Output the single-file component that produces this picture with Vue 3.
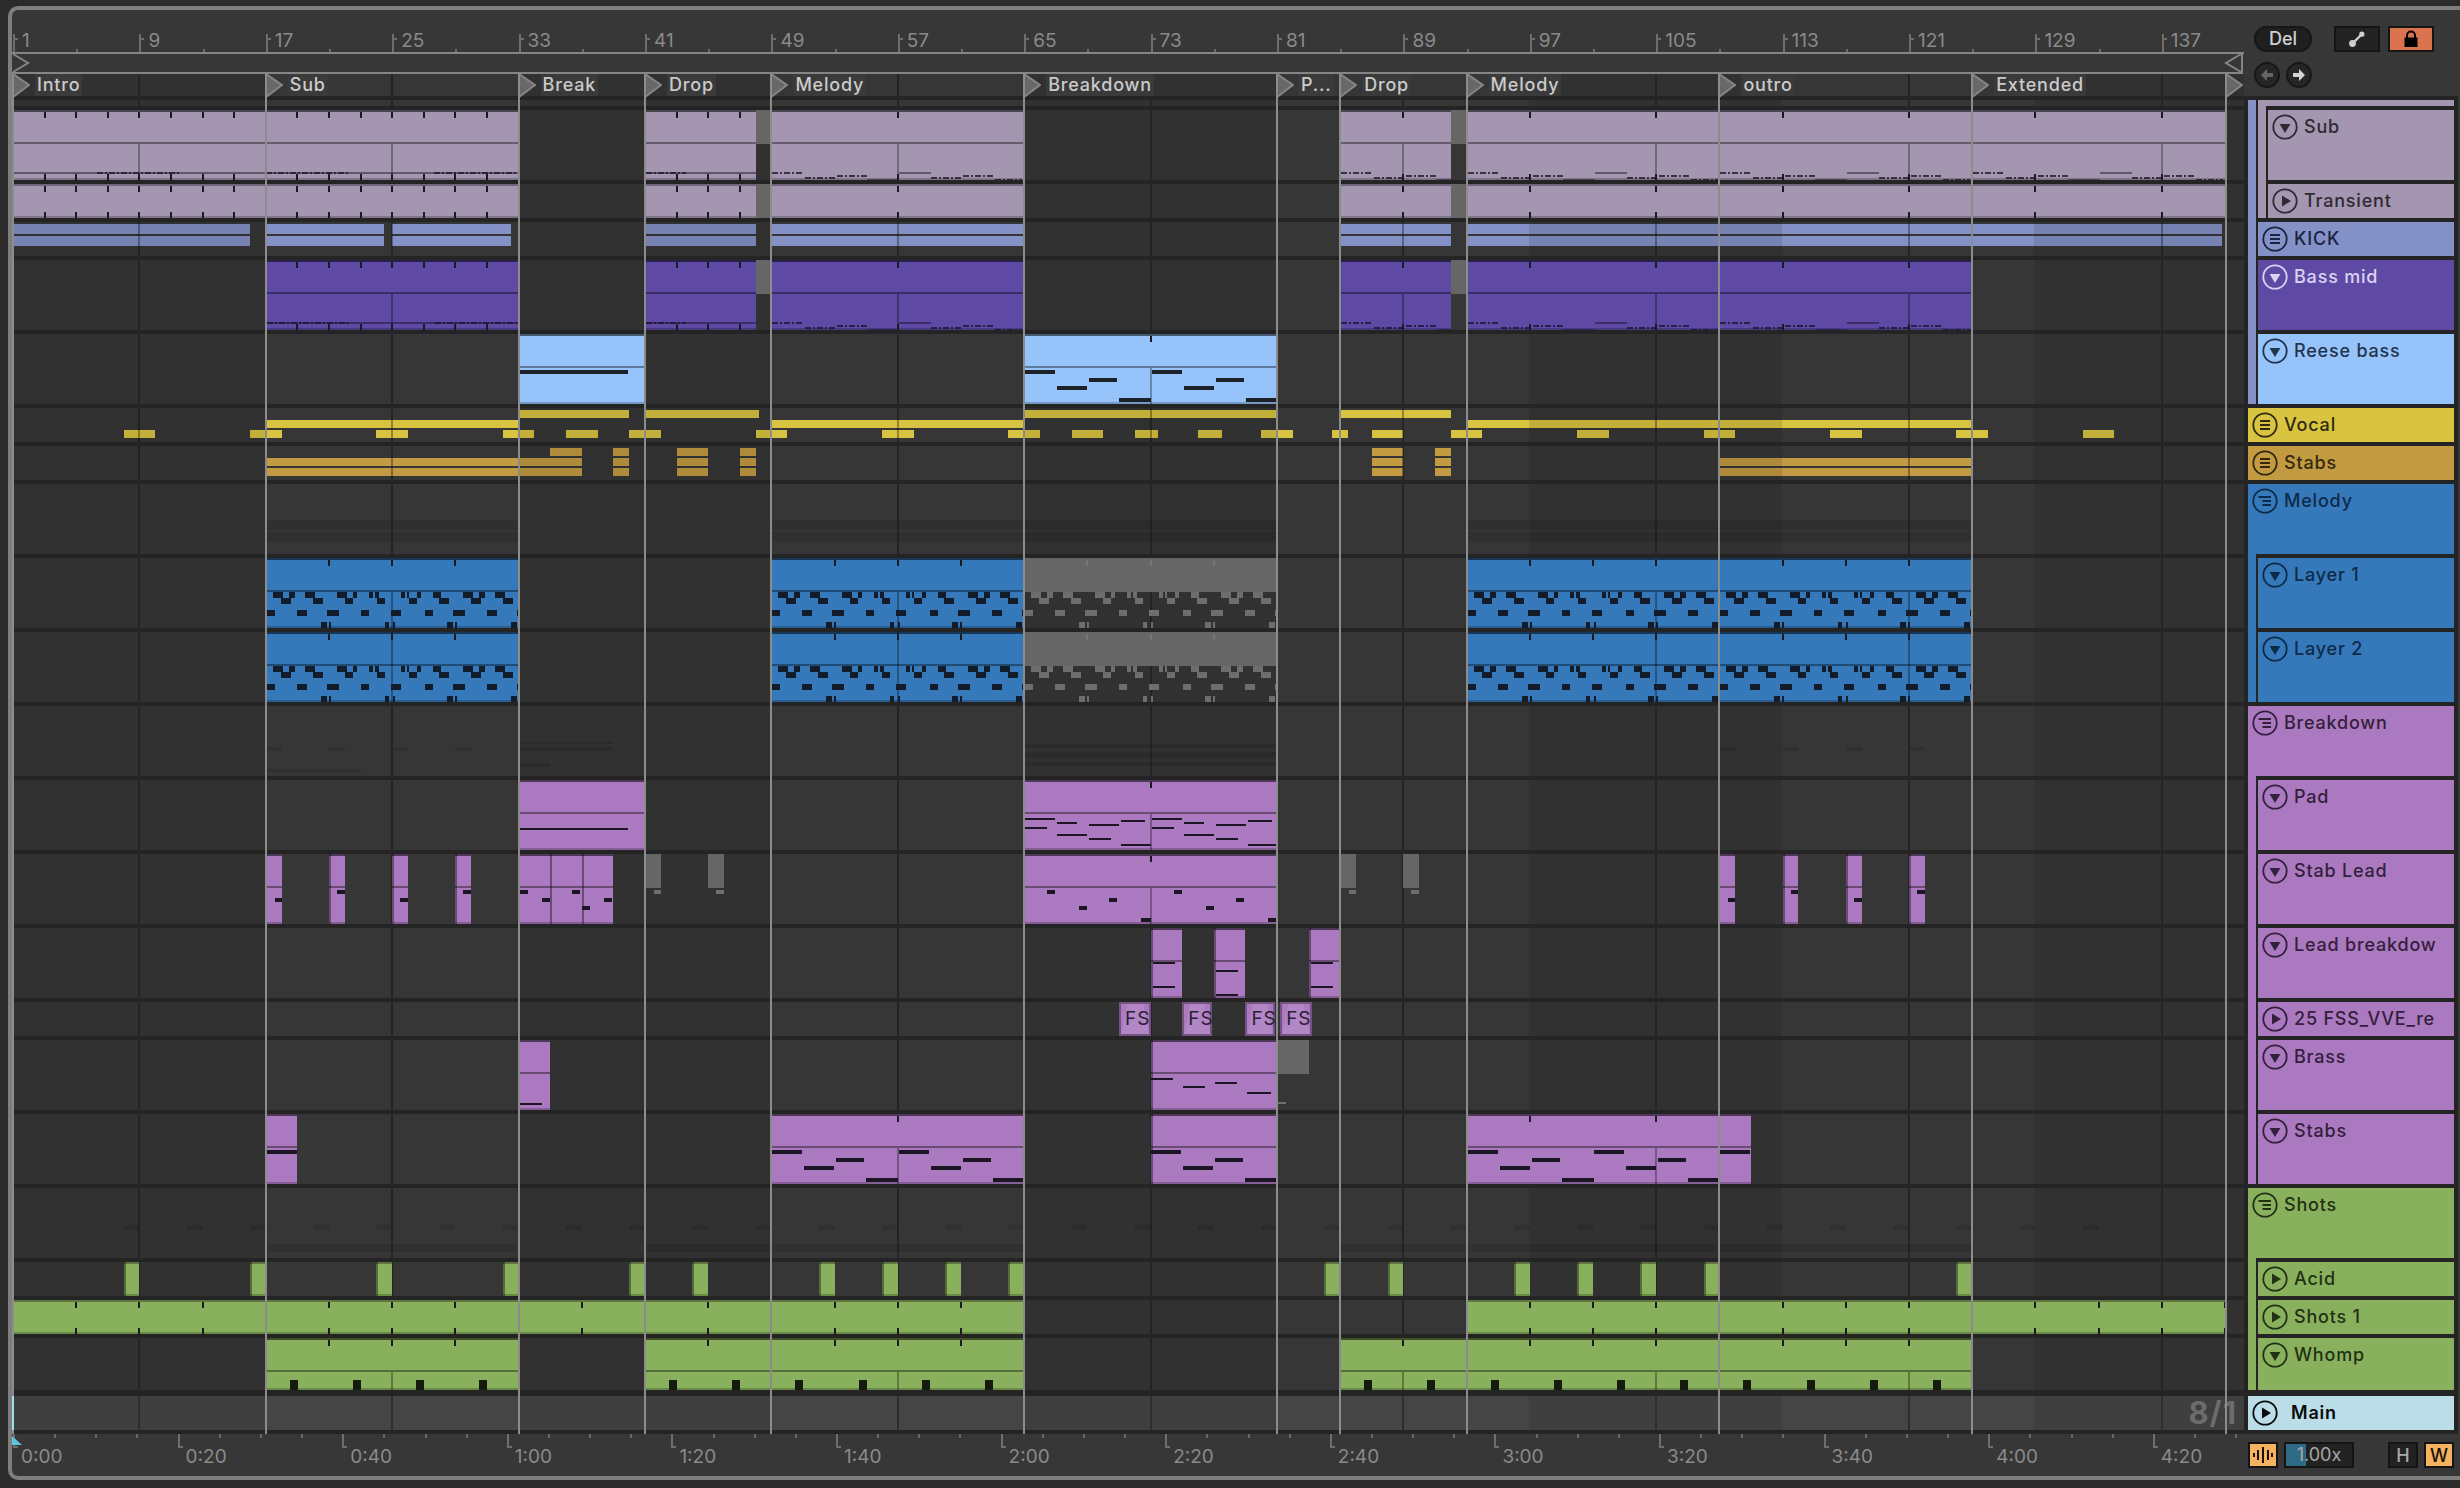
<template>
  <div class="frame">
    <!-- rulers and transport buttons -->
    <div class="top">
      <div class="rulers">
        <div class="beat-ruler">
          <i v-for="b in minorBars" :key="b" class="minor" :style="{ left: barX(b) + 'px' }"></i>
          <span v-for="b in majorBars" :key="b" class="bar-no" :style="{ left: barX(b) + 'px' }">{{ b }}</span>
        </div>
        <div class="scrub">
          <svg class="scrub-start" width="18" height="20" viewBox="0 0 18 20"><path d="M1 1 L16 10 L1 19" fill="none" stroke="#858585" stroke-width="2" /></svg>
          <svg class="scrub-end" width="18" height="20" viewBox="0 0 18 20"><path d="M17 1 L2 10 L17 19" fill="none" stroke="#858585" stroke-width="2" /></svg>
        </div>
        <div class="marks">
          <div v-for="l in locators" :key="l.bar" class="mark" :style="{ left: barX(l.bar) - 1 + 'px' }">
            <svg width="18" height="24" viewBox="0 0 18 24"><path d="M1 0 L17 11 L1 23 Z" fill="#686868" stroke="#868686" stroke-width="2" /></svg>
            <span v-if="l.name" class="mark-name">{{ l.name }}</span>
          </div>
        </div>
      </div>
      <div class="tools">
        <div class="tool-row">
          <span class="del">Del</span>
          <span class="square">
            <svg width="18" height="18" viewBox="0 0 18 18"><path d="M4 14 L14 4" stroke="#cfcfcf" stroke-width="2.4" /><circle cx="4.5" cy="13.5" r="3.4" fill="#cfcfcf" /><circle cx="13.8" cy="4.2" r="2.6" fill="#cfcfcf" /></svg>
          </span>
          <span class="square orange">
            <svg width="18" height="18" viewBox="0 0 18 18"><path d="M5 8 V5.5 a4 4 0 0 1 8 0 V8" fill="none" stroke="#000" stroke-width="2" /><rect x="2.5" y="7.5" width="13" height="9.5" fill="#000" /></svg>
          </span>
        </div>
        <div class="tool-row nav">
          <span class="round">
            <svg width="18" height="18" viewBox="0 0 18 18"><path d="M9 3 L3 9 L9 15 V11 H15 V7 H9 Z" fill="#666" /></svg>
          </span>
          <span class="round">
            <svg width="18" height="18" viewBox="0 0 18 18"><path d="M9 3 L15 9 L9 15 V11 H3 V7 H9 Z" fill="#d4d4d4" /></svg>
          </span>
        </div>
      </div>
    </div>

    <!-- tracks: lane on the left, header on the right -->
    <div class="tracks">
      <div v-for="(row, i) in rows" :key="i" class="row" :style="{ height: row.h + row.gap + 'px' }">
        <div class="lane" :class="{ overview: row.overview, master: row.master }" :style="{ height: row.h + 'px' }">
          <i v-for="(g, j) in row.ghosts" :key="j" class="ghost" :style="g"></i>
          <div
            v-for="(c, j) in row.clips"
            :key="j"
            class="clip"
            :class="[c.gray ? 'gray' : row.tone, { solid: c.gray && !c.head, edged: c.edged, strip: c.strip, boxed: c.label }]"
            :style="c.style"
          >
            <div v-if="c.head" class="clip-head"></div>
            <i v-for="(l, k) in c.lines" :key="k" class="gridline" :style="l"></i>
            <i v-for="(t, k) in c.ticks" :key="k" class="tick" :style="t"></i>
            <i v-for="(n, k) in c.notes" :key="k" class="note" :class="n.kind" :style="n.style"></i>
            <template v-if="c.label">
              <i class="wedge"></i>
              <span class="clip-label">{{ c.label }}</span>
            </template>
          </div>
          <span v-if="row.master" class="signature">8/1</span>
        </div>
        <div class="side">
          <i
            v-for="(s, j) in row.stripes"
            :key="j"
            class="stripe"
            :class="[s.tone, { end: s.end, flush: s.flush }]"
            :style="s.end ? { marginBottom: row.gap + 'px' } : null"
          ></i>
          <div class="head" :class="row.tone" :style="{ height: row.h + 'px' }">
            <svg v-if="row.icon" class="head-icon" width="26" height="26" viewBox="0 0 26 26">
              <circle cx="13" cy="13" r="11.7" fill="none" stroke="currentColor" stroke-width="1.8" />
              <path v-if="row.icon === 'down'" d="M7.6 10 H18.4 L13 19 Z" fill="currentColor" />
              <path v-if="row.icon === 'right'" d="M10 7.6 V18.4 L19 13 Z" fill="currentColor" />
              <path v-if="row.icon === 'list'" d="M8 9 H18 M8 13 H18 M8 17 H18" stroke="currentColor" stroke-width="2" />
              <path v-if="row.icon === 'group'" d="M6.5 9 H19 M10.5 13 H19 M10.5 17 H19" stroke="currentColor" stroke-width="2" />
            </svg>
            <span v-if="row.name" class="head-name">{{ row.name }}</span>
          </div>
          <i v-if="row.tail" class="tail" :class="row.tone" :style="{ height: row.gap + 'px' }"></i>
        </div>
      </div>
    </div>

    <!-- time ruler and bottom controls -->
    <div class="bottom">
      <div class="time-ruler">
        <i v-for="t in timeTicks" :key="t" class="time-tick" :style="{ left: t + 'px' }"></i>
        <span v-for="(t, i) in timeLabels" :key="t" class="time-no" :style="{ left: 1 + i * 164.6 + 'px' }">{{ t }}</span>
        <svg class="play-mark" width="10" height="9" viewBox="0 0 10 9"><path d="M0 0 L10 9 H0 Z" fill="#5bc6dd" /></svg>
      </div>
      <div class="controls">
        <span class="key on wave">
          <svg width="22" height="18" viewBox="0 0 22 18"><path d="M2 7 V11 M6 4 V14 M11 1 V17 M16 4 V14 M20 7 V11" stroke="#1a1208" stroke-width="2" /></svg>
        </span>
        <span class="speed"><i class="speed-fill"></i><span class="speed-text">1.00x</span></span>
        <span class="spacer"></span>
        <span class="key">H</span>
        <span class="key on">W</span>
      </div>
    </div>

    <!-- locator lines run over every track -->
    <i v-for="l in locators" :key="l.bar" class="loc-line" :style="{ left: barX(l.bar) - 1 + 'px' }"></i>
    <i class="playhead"></i>
  </div>
</template>

<script setup>
const U = 15.8
const WIDE = 252.8 // 16 bars
const EIGHT = 126.4
const END = 141.05

// position of a bar inside the lane (lane starts 1px before bar 1)
const barX = (b) => 1 + (b - 1) * U

const locators = [
  [1, 'Intro'], [17, 'Sub'], [33, 'Break'], [41, 'Drop'], [49, 'Melody'], [65, 'Breakdown'],
  [81, 'P...'], [85, 'Drop'], [93, 'Melody'], [109, 'outro'], [125, 'Extended'], [END, '']
].map(([bar, name]) => ({ bar, name }))
const locatorBars = locators.map((l) => l.bar)

const majorBars = []
for (let b = 1; b < 140; b += 8) majorBars.push(b)
const minorBars = majorBars.map((b) => b + 4).filter((b) => b < 141)

const timeLabels = ['0:00', '0:20', '0:40', '1:00', '1:20', '1:40', '2:00', '2:20', '2:40', '3:00', '3:20', '3:40', '4:00', '4:20']
const timeTicks = []
for (let i = 1; i < 55; i++) if (i % 4) timeTicks.push(Math.round(1 + i * 41.15))

// note patterns: [x, y, w, h, kind]
const wavePattern = [
  [0, 62, 30, 2, 'dash'], [33, 67, 30, 2, 'dash'], [65, 65, 30, 2, 'dash'], [95, 69, 32, 2, 'soft'],
  [127, 62, 32, 2, 'soft'], [159, 67, 30, 2, 'dash'], [191, 65, 30, 2, 'dash'], [223, 69, 27, 2, 'dash']
]
const reesePattern = [[0, 36, 30, 4], [32, 52, 30, 4], [64, 44, 28, 4], [94, 64, 32, 4]]
const stabPattern = [[22, 36, 8, 4], [54, 52, 8, 4], [84, 44, 8, 4], [116, 64, 10, 4]]
const padPattern = [[0, 38, 30, 2], [0, 47, 22, 2], [32, 54, 30, 2], [32, 42, 20, 2], [64, 44, 30, 2], [64, 58, 22, 2], [96, 64, 30, 2], [96, 40, 24, 2]]
const brassPattern = [[0, 38, 22, 2], [32, 46, 22, 2], [64, 42, 22, 2], [96, 52, 24, 2]]

const layerRows = [
  [34, [[6, 10], [22, 6], [38, 10], [70, 10], [86, 4], [102, 4], [108, 4], [134, 4], [140, 2], [150, 4], [166, 8], [196, 10], [212, 6], [228, 10]]],
  [40, [[14, 10], [46, 10], [78, 8], [110, 8], [142, 8], [172, 10], [204, 10], [236, 10]]],
  [52, [[0, 8], [30, 10], [60, 12], [94, 8], [124, 10], [158, 8], [186, 12], [220, 10], [250, 2]]],
  [64, [[54, 6], [62, 2], [118, 4], [126, 2], [180, 6], [188, 2], [244, 6]]]
]
const layerPattern = layerRows.flatMap(([y, list]) => list.map(([x, w]) => [x, y, w, 6]))

const flat = (dashes) => [[0, 62, 520, 2, 'soft'], ...dashes.map(([x, w]) => [x, 62, w, 2, 'dash'])]

// a clip is [from bar, to bar, options]
function makeClip(row, [a, b, o = {}]) {
  const onLoc = locatorBars.includes(a)
  const left = barX(a) + (onLoc ? 1 : 0)
  const right = barX(b) - (locatorBars.includes(b) ? 1 : 0)
  const width = right - left
  const y = o.y ?? 0
  const h = o.h ?? row.h
  const head = !o.strip && h >= 52
  const notes = []
  if (o.notes) {
    const period = o.period ?? 0
    for (let k = 0; k === 0 || (period && k * period < width); k++) {
      for (const [nx, ny, nw, nh, kind] of o.notes) {
        notes.push({
          kind,
          style: { left: nx + k * period + 'px', top: ny + 'px', width: nw + 'px', height: nh + 'px' }
        })
      }
    }
  }
  const ticks = []
  const lines = []
  if (!o.strip && !o.label && !o.noTicks) {
    const step = o.tick ?? 8
    for (let bar = 1; bar < END; bar += step) {
      if (bar <= a || bar >= b) continue
      const x = barX(bar) - left - 1
      ticks.push({ left: x + 'px', top: '2px' })
      if (row.bottomTicks) ticks.push({ left: x + 'px', top: h - 6 + 'px' })
    }
    for (let bar = 9; bar < END; bar += 16) {
      if (bar <= a || bar >= b) continue
      const x = barX(bar) - left - 1
      if (row.fullLine) lines.push({ left: x + 'px', top: 0, height: h + 'px' })
      else if (head) lines.push({ left: x + 'px', top: '34px', height: h - 34 + 'px' })
    }
  }
  return {
    gray: o.gray,
    head,
    strip: o.strip,
    label: o.label,
    edged: onLoc === false || o.edged,
    notes,
    ticks,
    lines,
    style: { left: left + 'px', width: width + 'px', top: y + 'px', height: h + 'px' }
  }
}

const bandList = (list, opt) => list.map(([a, b]) => [a, b, { strip: true, ...opt }])

const kickBars = [[1, 16], [17, 24.5], [25, 32.5], [41, 48], [49, 64.9], [85, 92], [93, 108.9], [109, 124.9], [125, 140.8]]
const vocalTop = [[33, 40], [41, 48.2], [65, 81], [85, 92]]
const vocalMid = [[17, 33], [49, 65], [93, 125]]
const vocalLow = [[8, 10], [16, 18], [24, 26], [32, 34], [36, 38], [40, 42], [48, 50], [56, 58], [64, 66], [68, 70], [72, 73.5], [76, 77.5], [80, 82], [84.5, 85.5], [87, 89], [92, 94], [100, 102], [108, 110], [116, 118], [124, 126], [132, 134]]
const stabsTop = [[35, 37], [39, 40], [43, 45], [47, 48], [87, 89], [91, 92]]
const stabsLow = [[17, 37], [39, 40], [43, 45], [47, 48], [87, 89], [91, 92], [109, 125]]

const stripeKick = { tone: 'kick' }
const stripeLilac = { tone: 'lilac' }
const stripeBlue = { tone: 'blue' }
const stripePink = { tone: 'pink' }
const stripeGreen = { tone: 'green' }

const ghost = (a, b, y, h) => ({ left: barX(a) + 'px', width: (b - a) * U + 'px', top: y + 'px', height: h + 'px' })
const everyFour = (from, count, y, h) => Array.from({ length: count }, (_, i) => ghost(from + i * 4, from + i * 4 + 1, y, h))

const subClips = (tall) => {
  const n = (list) => (tall ? { notes: list } : {})
  return [
    [1, 33, { tick: 2, ...n(flat([[83, 84], [252, 84], [420, 85]])) }],
    [41, 48, { tick: 2, ...n(flat([[0, 40]])) }],
    [48, 49, { gray: true, noTicks: true }],
    [49, 65, { ...(tall ? { notes: wavePattern, period: WIDE } : {}) }],
    [85, 92, { tick: 8, ...(tall ? { notes: wavePattern } : {}) }],
    [92, 93, { gray: true, noTicks: true }],
    [93, END, { ...(tall ? { notes: wavePattern, period: WIDE } : {}) }]
  ]
}

const rawRows = [
  { h: 6, tone: 'lilac', stripes: [stripeKick, { tone: 'lilac', flush: true }] },
  { name: 'Sub', h: 70, tone: 'lilac', icon: 'down', stripes: [stripeKick, stripeLilac], bottomTicks: true, clips: subClips(true) },
  { name: 'Transient', h: 34, tone: 'lilac', icon: 'right', stripes: [stripeKick, { tone: 'lilac', end: true }], bottomTicks: true, clips: subClips(false) },
  { name: 'KICK', h: 34, tone: 'kick', icon: 'list', stripes: [stripeKick], overview: true,
    clips: [...bandList(kickBars, { y: 2, h: 10 }), ...bandList(kickBars, { y: 14, h: 10 })] },
  { name: 'Bass mid', h: 70, tone: 'purple', icon: 'down', stripes: [stripeKick], bottomTicks: true,
    clips: [
      [17, 33, { tick: 2, notes: flat([[0, 84], [168, 85]]) }],
      [41, 48, { tick: 2, notes: flat([[0, 40]]) }],
      [48, 49, { gray: true, noTicks: true }],
      [49, 65, { notes: wavePattern, period: WIDE }],
      [85, 92, { notes: wavePattern }],
      [92, 93, { gray: true, noTicks: true }],
      [93, 109, { notes: wavePattern, period: WIDE }],
      [109, 125, { notes: wavePattern, period: WIDE }]
    ] },
  { name: 'Reese bass', h: 70, tone: 'reese', icon: 'down', stripes: [{ tone: 'kick', end: true }],
    clips: [[33, 41, { notes: [[0, 36, 108, 4]] }], [65, 81, { notes: reesePattern, period: EIGHT }]] },
  { name: 'Vocal', h: 34, tone: 'vocal', icon: 'list', stripes: [], overview: true,
    clips: [...bandList(vocalTop, { y: 2, h: 8 }), ...bandList(vocalMid, { y: 12, h: 8 }), ...bandList(vocalLow, { y: 22, h: 8 })] },
  { name: 'Stabs', h: 34, tone: 'stabs', icon: 'list', stripes: [], overview: true,
    clips: [...bandList(stabsTop, { y: 2, h: 8 }), ...bandList(stabsLow, { y: 12, h: 8 }), ...bandList(stabsLow, { y: 22, h: 8 })] },
  { name: 'Melody', h: 70, tone: 'blue', icon: 'group', stripes: [], tail: true,
    ghosts: [[17, 33], [49, 65], [65, 81], [93, 125]].flatMap(([a, b]) => [ghost(a, b, 36, 10), ghost(a, b, 48, 10)]) },
  { name: 'Layer 1', h: 70, tone: 'blue', icon: 'down', stripes: [stripeBlue],
    clips: layerClips() },
  { name: 'Layer 2', h: 70, tone: 'blue', icon: 'down', stripes: [{ tone: 'blue', end: true }], fullLine: true,
    clips: layerClips() },
  { name: 'Breakdown', h: 70, tone: 'pink', icon: 'group', stripes: [], tail: true,
    ghosts: [...everyFour(17, 4, 41, 4), ghost(17, 23, 63, 3), ghost(33, 39, 36, 2), ghost(33, 39, 41, 4), ghost(33, 35, 57, 4), ghost(65, 81, 38, 4), ghost(65, 81, 46, 6), ghost(65, 81, 56, 4), ...everyFour(109, 4, 41, 4)] },
  { name: 'Pad', h: 70, tone: 'pink', icon: 'down', stripes: [stripePink],
    clips: [[33, 41, { notes: [[0, 48, 108, 2]] }], [65, 81, { notes: padPattern, period: EIGHT }]] },
  { name: 'Stab Lead', h: 70, tone: 'pink', icon: 'down', stripes: [stripePink],
    clips: [
      [17, 18, { notes: [[8, 44, 8, 4]] }], [21, 22, { notes: [[8, 36, 8, 4]] }], [25, 26, { notes: [[8, 44, 8, 4]] }], [29, 30, { notes: [[8, 36, 8, 4]] }],
      [33, 35, { notes: [[0, 36, 8, 4], [22, 44, 8, 4]] }], [35, 37, { notes: [[22, 36, 8, 4]] }], [37, 39, { notes: [[0, 52, 8, 4], [22, 44, 8, 4]] }],
      [41, 42, { gray: true, notes: [[8, 36, 8, 4]] }], [45, 46, { gray: true, notes: [[8, 36, 8, 4]] }],
      [65, 81, { notes: stabPattern, period: EIGHT }],
      [85, 86, { gray: true, notes: [[8, 36, 8, 4]] }], [89, 90, { gray: true, notes: [[8, 36, 8, 4]] }],
      [109, 110, { notes: [[8, 44, 8, 4]] }], [113, 114, { notes: [[8, 36, 8, 4]] }], [117, 118, { notes: [[8, 44, 8, 4]] }], [121, 122, { notes: [[8, 36, 8, 4]] }]
    ] },
  { name: 'Lead breakdown'.slice(0, 13), h: 70, tone: 'pink', icon: 'down', stripes: [stripePink],
    clips: [
      [73, 75, { edged: true, notes: [[2, 34, 22, 2], [2, 58, 22, 2]] }],
      [77, 79, { notes: [[2, 42, 22, 2], [2, 66, 22, 2]] }],
      [83, 85, { notes: [[2, 34, 22, 2], [2, 58, 22, 2]] }]
    ] },
  { name: '25 FSS_VVE_re', h: 34, tone: 'pink', icon: 'right', stripes: [stripePink],
    clips: [[71, 73.05], [75, 76.9], [79, 80.85], [81.2, 83.2]].map(([a, b]) => [a, b, { label: 'FSS', edged: true }]) },
  { name: 'Brass', h: 70, tone: 'pink', icon: 'down', stripes: [stripePink],
    clips: [
      [33, 35, { notes: [[0, 63, 22, 2]] }],
      [73, 81, { notes: brassPattern, period: EIGHT }],
      [81, 83, { gray: true, notes: [[0, 62, 8, 2]] }]
    ] },
  { name: 'Stabs', h: 70, tone: 'pink', icon: 'down', stripes: [{ tone: 'pink', end: true }],
    clips: [
      [17, 19, { notes: reesePattern }],
      [49, 65, { notes: reesePattern, period: EIGHT }],
      [73, 81, { notes: reesePattern, period: EIGHT }],
      [93, 109, { notes: reesePattern, period: EIGHT }],
      [109, 111, { notes: reesePattern }]
    ] },
  { name: 'Shots', h: 70, tone: 'green', icon: 'group', stripes: [], tail: true,
    ghosts: [[17, 33], [41, 65], [85, 125]].flatMap(([a, b]) => [ghost(a, b, 56, 8)]).concat(everyFour(8, 32, 37, 5)) },
  { name: 'Acid', h: 34, tone: 'green', icon: 'right', stripes: [stripeGreen],
    clips: [8, 16, 24, 32, 40, 44, 52, 56, 60, 64, 84, 88, 96, 100, 104, 108, 124].map((b) => [b, b + 1, { noTicks: true, edged: true }]) },
  { name: 'Shots 1', h: 34, tone: 'green', icon: 'right', stripes: [stripeGreen], bottomTicks: true,
    clips: [[1, 65, { tick: 4 }], [93, END, { tick: 4 }]] },
  { name: 'Whomp', h: 52, gap: 6, tone: 'green', icon: 'down', stripes: [{ tone: 'green', end: true }],
    clips: [[17, 33], [41, 65], [85, 125]].map(([a, b]) => [a, b, { tick: 4, notes: [[23, 42, 8, 10]], period: 63.2 }]) },
  { name: 'Main', h: 34, tone: 'main', icon: 'right', stripes: [], master: true }
]

function layerClips() {
  const opt = { tick: 4, notes: layerPattern, period: WIDE }
  return [[17, 33, opt], [49, 65, opt], [65, 81, { ...opt, gray: true }], [93, 109, opt], [109, 125, opt]]
}

const rows = rawRows.map((row) => ({
  gap: 4,
  ...row,
  clips: (row.clips ?? []).map((c) => makeClip(row, c))
}))
</script>

<style scoped>
.frame {
  position: relative;
  box-sizing: border-box;
  width: 2452px;
  height: 1474px;
  margin: 6px 0 0 8px;
  border: 4px solid #7e7e7e;
  border-right: 0;
  border-radius: 10px 0 0 10px;
  background: #373737;
  font-family: Inter, "Liberation Sans", sans-serif;
  overflow: hidden;
}

.top {
  display: flex;
  height: 86px;
}

.rulers {
  position: relative;
  flex: none;
  width: 2232px;
}

.beat-ruler {
  position: relative;
  height: 42px;
  border-bottom: 2px solid #858585;
}

.minor {
  position: absolute;
  bottom: 0;
  width: 2px;
  height: 3px;
  background: #6c6c6c;
}

.bar-no {
  position: absolute;
  top: 24px;
  height: 18px;
  padding-left: 7px;
  border-left: 2px solid #6e6e6e;
  color: #8a8a8a;
  font-size: 19px;
  line-height: 14px;
}

.bar-no::before {
  content: "";
  position: absolute;
  top: 4px;
  left: 0;
  width: 3px;
  height: 2px;
  background: #6e6e6e;
}

.scrub {
  position: relative;
  height: 18px;
  border-bottom: 2px solid #858585;
  border-right: 2px solid #858585;
  margin-right: 1px;
}

.scrub-start {
  position: absolute;
  top: -1px;
  left: 0;
}

.scrub-end {
  position: absolute;
  top: -1px;
  right: -1px;
}

.marks {
  position: relative;
  height: 22px;
  background:
    repeating-linear-gradient(90deg, transparent 0 126.4px, #242424 126.4px 128.4px, transparent 128.4px 252.8px),
    repeating-linear-gradient(90deg, #313131 0 252.8px, #363636 252.8px 505.6px);
}

.mark {
  position: absolute;
  top: 0;
  display: flex;
  height: 22px;
}

.mark-name {
  height: 22px;
  margin-left: 5px;
  padding: 0 2px;
  background: #3a3a3a;
  color: #cbcbcb;
  font-size: 18px;
  font-weight: 500;
  letter-spacing: 0.8px;
  line-height: 22px;
  white-space: nowrap;
}

.tools {
  display: flex;
  flex-direction: column;
  gap: 10px;
  padding: 16px 0 0 10px;
}

.tool-row {
  display: flex;
  align-items: center;
  gap: 8px;
}

.del {
  width: 58px;
  height: 26px;
  margin-right: 14px;
  border-radius: 13px;
  background: #1f1f1f;
  box-shadow: inset 0 0 0 2px #171717;
  color: #d0d0d0;
  font-size: 18px;
  font-weight: 500;
  line-height: 26px;
  text-align: center;
}

.square {
  display: flex;
  align-items: center;
  justify-content: center;
  box-sizing: border-box;
  width: 46px;
  height: 26px;
  border: 2px solid #151515;
  background: #232323;
}

.orange {
  background: #d9744f;
}

.nav {
  gap: 6px;
}

.round {
  display: flex;
  align-items: center;
  justify-content: center;
  box-sizing: border-box;
  width: 26px;
  height: 26px;
  border: 2px solid #171717;
  border-radius: 50%;
  background: #262626;
}

.tracks {
  width: 2446px;
  padding-top: 4px;
  background: #242424;
}

.row {
  display: flex;
}

.lane {
  position: relative;
  flex: none;
  width: 2232px;
  background:
    repeating-linear-gradient(90deg, transparent 0 126.4px, #242424 126.4px 128.4px, transparent 128.4px 252.8px),
    repeating-linear-gradient(90deg, #313131 0 252.8px, #363636 252.8px 505.6px);
}

.lane.overview {
  background: #363636;
}

.lane.overview::after {
  content: "";
  position: absolute;
  inset: 0;
  background:
    repeating-linear-gradient(90deg, transparent 0 126.4px, rgba(0, 0, 0, 0.32) 126.4px 128.4px, transparent 128.4px 252.8px),
    repeating-linear-gradient(90deg, rgba(0, 0, 0, 0.1) 0 252.8px, transparent 252.8px 505.6px);
  pointer-events: none;
}

.lane.master {
  background:
    repeating-linear-gradient(90deg, transparent 0 126.4px, #2e2e2e 126.4px 128.4px, transparent 128.4px 252.8px),
    repeating-linear-gradient(90deg, #3f3f3f 0 252.8px, #454545 252.8px 505.6px);
}

.ghost {
  position: absolute;
  background: rgba(0, 0, 0, 0.11);
}

.signature {
  position: absolute;
  top: 0;
  right: 7px;
  color: #6c6c6c;
  font-size: 31px;
  font-weight: 700;
  line-height: 34px;
  letter-spacing: 1px;
}

.clip {
  position: absolute;
  overflow: hidden;
  --ink: #1b1b1f;
  box-shadow: inset 0 2px 0 rgba(0, 0, 0, 0.32), inset 0 -2px 0 rgba(0, 0, 0, 0.22);
}

.clip.edged {
  box-shadow: inset 2px 0 0 rgba(0, 0, 0, 0.38), inset 0 2px 0 rgba(0, 0, 0, 0.32), inset 0 -2px 0 rgba(0, 0, 0, 0.22);
}

.clip.strip {
  box-shadow: none;
}

.clip.boxed {
  box-shadow: inset 0 0 0 2px rgba(0, 0, 0, 0.32);
}

.clip-head {
  position: absolute;
  top: 0;
  left: 0;
  width: 100%;
  height: 34px;
  box-shadow: inset 0 2px 0 rgba(0, 0, 0, 0.32), inset 0 -2px 0 rgba(0, 0, 0, 0.38);
}

.gridline {
  position: absolute;
  width: 2px;
  background: rgba(0, 0, 0, 0.3);
}

.tick {
  position: absolute;
  width: 2px;
  height: 6px;
  background: #1a1a20;
}

.note {
  position: absolute;
  background: var(--ink);
}

.note.soft {
  opacity: 0.5;
}

.note.dash {
  background: repeating-linear-gradient(90deg, var(--ink) 0 6px, transparent 6px 8px, var(--ink) 8px 10px, transparent 10px 12px);
  opacity: 0.8;
}

.clip-label {
  position: relative;
  display: block;
  padding-left: 6px;
  color: #2a1f33;
  font-size: 19px;
  line-height: 34px;
  letter-spacing: 1px;
}

.wedge {
  position: absolute;
  inset: 2px 2px 2px 2px;
  background: rgba(255, 255, 255, 0.1);
  clip-path: polygon(22% 0, 78% 0, 100% 100%, 0 100%);
}

.clip.gray {
  --ink: #6e6e6e;
  background: transparent;
  box-shadow: none;
}

.clip.gray .clip-head {
  background: #666;
  box-shadow: none;
}

.clip.gray .tick {
  background: #757575;
}

.clip.gray .gridline {
  background: transparent;
}

.clip.gray.solid {
  background: #666;
}

.side {
  position: relative;
  display: flex;
  flex: none;
  width: 206px;
  margin-left: 4px;
}

.stripe {
  flex: none;
  width: 8px;
  margin-right: 2px;
}

.stripe.flush {
  margin-right: 0;
}

.head {
  position: relative;
  display: flex;
  flex: 1;
  min-width: 0;
  overflow: hidden;
  padding: 4px 0 0 4px;
  box-sizing: border-box;
  color: #2d2933;
}

.head-icon {
  flex: none;
}

.head-name {
  margin-left: 6px;
  font-size: 18px;
  font-weight: 500;
  letter-spacing: 0.8px;
  line-height: 26px;
  white-space: nowrap;
}

.tail {
  position: absolute;
  bottom: 0;
  left: 0;
  width: 8px;
}

.lilac { background: #a495b1; --ink: #1e1a24; color: #2e2a33; }
.kick { background: #8391c6; color: #1c2340; }
.purple { background: #5e49a4; --ink: #1b1430; color: #dcd3f2; }
.reese { background: #97c3fb; --ink: #1d2228; color: #22344c; }
.vocal { background: #d8c440; color: #2f2a0d; }
.stabs { background: #c29a41; color: #33280f; }
.blue { background: #3579bb; --ink: #131c2a; color: #0d2a48; }
.pink { background: #ab79bf; --ink: #1c1524; color: #33203c; }
.green { background: #89b05c; --ink: #151b0f; color: #223015; }
.main { background: #badde8; color: #0a0a0a; }

.main .head-name {
  margin-left: 13px;
  font-weight: 600;
}

.bottom {
  display: flex;
  height: 42px;
}

.time-ruler {
  position: relative;
  flex: none;
  width: 2236px;
}

.time-tick {
  position: absolute;
  top: 0;
  width: 2px;
  height: 4px;
  background: #666;
}

.time-no {
  position: absolute;
  top: 0;
  height: 14px;
  padding-left: 6px;
  border-left: 2px solid #6e6e6e;
  color: #8a8a8a;
  font-size: 19px;
  line-height: 46px;
}

.time-no::before {
  content: "";
  position: absolute;
  bottom: 0;
  left: 0;
  width: 3px;
  height: 2px;
  background: #6e6e6e;
}

.play-mark {
  position: absolute;
  top: 2px;
  left: 0;
}

.controls {
  display: flex;
  flex: 1;
  gap: 6px;
  height: 26px;
  padding-top: 8px;
  padding-right: 6px;
}

.key {
  display: flex;
  align-items: center;
  justify-content: center;
  box-sizing: border-box;
  width: 30px;
  height: 26px;
  border: 2px solid #141414;
  background: #222;
  color: #aaa;
  font-size: 18px;
  font-weight: 500;
}

.key.on {
  background: #f5b260;
  color: #1a1208;
}

.speed {
  position: relative;
  box-sizing: border-box;
  width: 70px;
  height: 26px;
  border: 2px solid #141414;
  background: #222;
}

.speed-fill {
  position: absolute;
  top: 0;
  bottom: 0;
  left: 0;
  width: 20px;
  background: #2f6b85;
}

.speed-text {
  position: relative;
  display: block;
  color: #a8a8a8;
  font-size: 18px;
  line-height: 22px;
  text-align: center;
}

.spacer {
  flex: 1;
}

.loc-line {
  position: absolute;
  top: 64px;
  width: 2px;
  height: 1360px;
  background: #8c8c8c;
  z-index: 3;
}

.playhead {
  position: absolute;
  top: 1386px;
  left: 0;
  width: 2px;
  height: 34px;
  background: #9fe0ee;
  z-index: 4;
}
</style>

<style>
body {
  margin: 0;
  background: #2b2b2b;
}
</style>
